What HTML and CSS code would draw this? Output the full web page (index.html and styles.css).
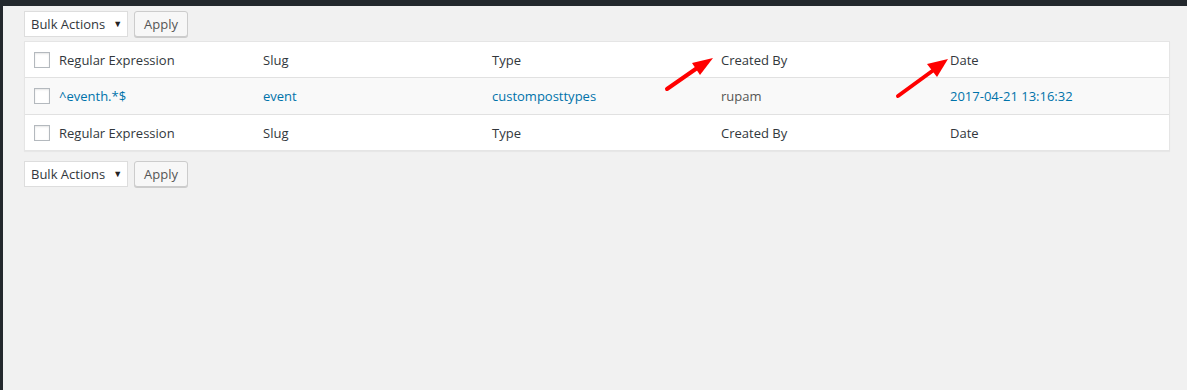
FILE: index.html
```html
<!DOCTYPE html>
<html lang="en">
<head>
    <meta charset="UTF-8">
    <title>Rules</title>
    <link rel="stylesheet" href="styles.css">
</head>
<body>
    <div class="topbar"></div>
    <div class="wrap">
        <div class="tablenav">
            <div class="select">Bulk Actions <span class="caret">&#9660;</span></div>
            <button class="btn">Apply</button>
        </div>

        <div class="table">
            <div class="row head">
                <div class="cell check"><span class="box"></span>Regular Expression</div>
                <div class="cell">Slug</div>
                <div class="cell">Type</div>
                <div class="cell">Created By</div>
                <div class="cell">Date</div>
            </div>
            <div class="row alt">
                <div class="cell check"><span class="box"></span><a>^eventh.*$</a></div>
                <div class="cell"><a>event</a></div>
                <div class="cell"><a>customposttypes</a></div>
                <div class="cell muted">rupam</div>
                <div class="cell"><a>2017-04-21 13:16:32</a></div>
            </div>
            <div class="row">
                <div class="cell check"><span class="box"></span>Regular Expression</div>
                <div class="cell">Slug</div>
                <div class="cell">Type</div>
                <div class="cell">Created By</div>
                <div class="cell">Date</div>
            </div>
        </div>

        <div class="tablenav">
            <div class="select">Bulk Actions <span class="caret">&#9660;</span></div>
            <button class="btn">Apply</button>
        </div>
    </div>

    <!-- стрелки поверх таблицы -->
    <svg class="arrows" width="1187" height="390" viewBox="0 0 1187 390">
        <line x1="667" y1="89" x2="700" y2="66" stroke="#f00" stroke-width="4" stroke-linecap="round"/>
        <polygon points="713,58 692,63 700,75" fill="#f00"/>
        <line x1="898" y1="96" x2="935" y2="69" stroke="#f00" stroke-width="4" stroke-linecap="round"/>
        <polygon points="948,59 927,64 937,77" fill="#f00"/>
    </svg>
</body>
</html>
```

FILE: styles.css
```css
body {
    margin: 0;
    padding: 0;
    background-color: #f1f1f1;
    font-family: 'Open Sans', sans-serif;
    font-size: 13px;
    color: #32373c;
    border-left: 3px solid #23282d;
    height: 390px;
    box-sizing: border-box;
    overflow: hidden;
    position: relative;
}

.topbar {
    height: 6px;
    background-color: #23282d;
}

.wrap {
    padding: 5px 17px 0 21px;
}

.tablenav {
    display: flex;
    gap: 6px;
    height: 26px;
}

.select {
    width: 104px;
    height: 26px;
    box-sizing: border-box;
    border: 1px solid #ddd;
    background-color: #fff;
    padding: 0 0 0 6px;
    line-height: 24px;
    color: #32373c;
    display: flex;
    align-items: center;
    gap: 8px;
}

.caret {
    font-size: 9px;
    color: #222;
}

.btn {
    width: 54px;
    height: 26px;
    border: 1px solid #ccc;
    border-radius: 3px;
    background-color: #f7f7f7;
    box-shadow: 0 1px 0 #ccc;
    font-family: 'Open Sans', sans-serif;
    font-size: 13px;
    color: #555;
    padding: 0;
}

.table {
    margin: 4px 0 10px 0;
    background-color: #fff;
    border: 1px solid #e5e5e5;
    box-shadow: 0 1px 1px rgba(0, 0, 0, 0.04);
}

.row {
    display: grid;
    grid-template-columns: 238px 229px 229px 229px 1fr;
    height: 35px;
    align-items: center;
}

.row.head {
    border-bottom: 1px solid #e1e1e1;
}

.row.alt {
    background-color: #f9f9f9;
    height: 36px;
    border-bottom: 1px solid #e1e1e1;
}

.cell {
    display: flex;
    align-items: center;
}

.check {
    padding-left: 9px;
}

.box {
    width: 14px;
    height: 14px;
    border: 1px solid #b4b9be;
    background-color: #fff;
    margin-right: 9px;
    box-shadow: inset 0 1px 2px rgba(0, 0, 0, 0.1);
}

a {
    color: #0073aa;
    text-decoration: none;
}

.muted {
    color: #555;
}

.arrows {
    position: absolute;
    top: 0;
    left: -3px;
    pointer-events: none;
}
```
